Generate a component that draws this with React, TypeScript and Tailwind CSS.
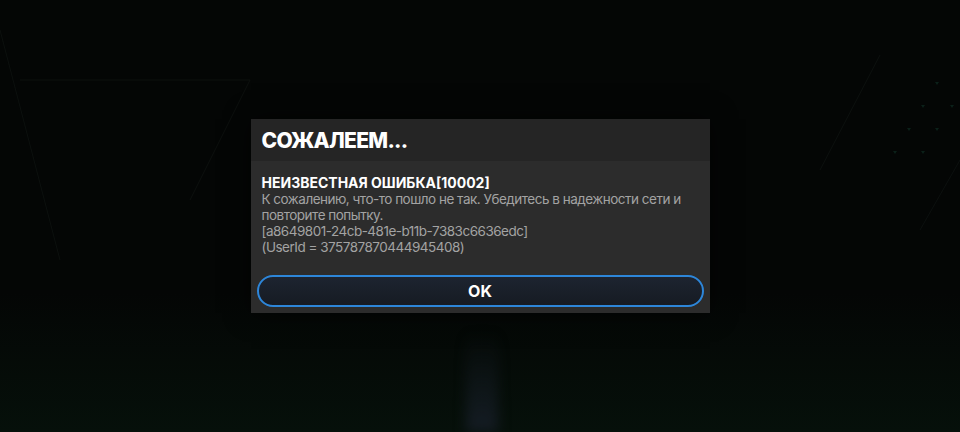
export default function App() {
  return (
    <main
      className="relative flex h-[432px] w-[960px] items-center justify-center overflow-hidden bg-[#040605]"
      style={{ fontFamily: "Inter, 'Noto Sans', sans-serif" }}
    >
      <Backdrop />
      <section className="relative z-10 flex w-[459px] flex-col bg-[#2c2c2c] shadow-[0_0_24px_rgba(0,0,0,0.6)]">
        <header className="flex h-[42px] items-center bg-[#252525] px-[11px]">
          <h1 className="text-[21px] font-extrabold leading-none tracking-[-0.7px] text-white">
            СОЖАЛЕЕМ...
          </h1>
        </header>
        <div className="px-[11px] pt-[14px] pb-[20px] text-[13.5px] leading-[16px]">
          <h2 className="text-[14px] font-bold text-white">НЕИЗВЕСТНАЯ ОШИБКА[10002]</h2>
          <div className="tracking-[-0.5px] text-[#a3a3a3]">
            <p>К сожалению, что-то пошло не так. Убедитесь в надежности сети и повторите попытку.</p>
            <p>[a8649801-24cb-481e-b11b-7383c6636edc]</p>
            <p>(UserId = 375787870444945408)</p>
          </div>
        </div>
        <div className="px-[6px] pb-[6px]">
          <button className="flex h-[32px] w-full items-center justify-center rounded-full border-2 border-[#2d86d9] bg-gradient-to-b from-[#1d2430] to-[#161b23] text-[16px] font-bold text-white">
            OK
          </button>
        </div>
      </section>
    </main>
  );
}

function Backdrop() {
  return (
    <div className="pointer-events-none absolute inset-0">
      <div className="absolute inset-x-0 bottom-0 h-[140px] bg-gradient-to-b from-transparent to-[#06100a]" />
      <div className="absolute bottom-0 left-[466px] h-[100px] w-[32px] bg-gradient-to-b from-transparent to-[#151c24] blur-[6px]" />
      <svg className="absolute inset-0" width="960" height="432" viewBox="0 0 960 432">
        <g stroke="#0c100e" strokeWidth="1" fill="none">
          <path d="M20 80 L250 80 L190 200" />
          <path d="M0 30 L60 260" />
          <path d="M880 55 L820 170" />
          <path d="M960 160 L920 230" />
        </g>
        <g fill="#0b2019">
          <path d="M935 82 l4 0 l-2 3 z" />
          <path d="M921 105 l4 0 l-2 3 z" />
          <path d="M950 105 l4 0 l-2 3 z" />
          <path d="M907 128 l4 0 l-2 3 z" />
          <path d="M935 128 l4 0 l-2 3 z" />
          <path d="M893 151 l4 0 l-2 3 z" />
          <path d="M921 151 l4 0 l-2 3 z" />
        </g>
      </svg>
    </div>
  );
}
